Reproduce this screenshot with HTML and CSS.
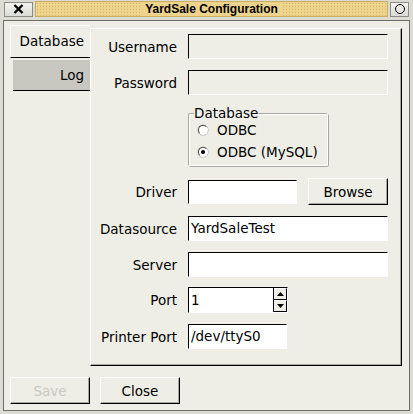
FILE: index.html
```html
<!DOCTYPE html>
<html>
<head>
<meta charset="utf-8">
<link rel="stylesheet" href="styles.css">
</head>
<body>
<div class="window">
  <div class="titlebar">
    <div class="tb-btn tb-close">
      <svg width="11" height="10" viewBox="0 0 11 10"><path d="M1.5 1 L9.5 9 M9.5 1 L1.5 9" stroke="#000" stroke-width="2.4"/></svg>
    </div>
    <div class="tb-title"><span>YardSale Configuration</span></div>
    <div class="tb-btn tb-max">
      <svg width="12" height="12" viewBox="0 0 12 12"><circle cx="6" cy="6" r="4.5" fill="none" stroke="#000" stroke-width="1"/></svg>
    </div>
  </div>
  <div class="client">
    <div class="tabwidget">
      <div class="tabs">
        <div class="tab tab-active">Database</div>
        <div class="tab">Log</div>
      </div>
      <div class="panel">
        <div class="form">
          <div class="row">
            <label class="lbl">Username</label>
            <div class="field wide disabled"></div>
          </div>
          <div class="row">
            <label class="lbl">Password</label>
            <div class="field wide disabled"></div>
          </div>
          <div class="row row-group">
            <span class="lbl"></span>
            <fieldset class="group">
              <legend>Database</legend>
              <div class="radio"><span class="rb"></span>ODBC</div>
              <div class="radio"><span class="rb checked"></span>ODBC (MySQL)</div>
            </fieldset>
          </div>
          <div class="row row-driver">
            <label class="lbl">Driver</label>
            <div class="field short"></div>
            <div class="btn browse">Browse</div>
          </div>
          <div class="row">
            <label class="lbl">Datasource</label>
            <div class="field wide">YardSaleTest</div>
          </div>
          <div class="row">
            <label class="lbl">Server</label>
            <div class="field wide"></div>
          </div>
          <div class="row row-port">
            <label class="lbl">Port</label>
            <div class="spin">
              <div class="spin-text">1</div>
              <div class="spin-btns">
                <div class="spin-up"><svg width="7" height="4" viewBox="0 0 7 4"><path d="M3.5 0 L7 4 L0 4 Z" fill="#000"/></svg></div>
                <div class="spin-down"><svg width="7" height="4" viewBox="0 0 7 4"><path d="M0 0 L7 0 L3.5 4 Z" fill="#000"/></svg></div>
              </div>
            </div>
          </div>
          <div class="row">
            <label class="lbl">Printer Port</label>
            <div class="field port">/dev/ttyS0</div>
          </div>
        </div>
      </div>
    </div>
    <div class="buttons">
      <div class="btn dim">Save</div>
      <div class="btn">Close</div>
    </div>
  </div>
</div>
</body>
</html>
```

FILE: styles.css
```css
html, body {
  margin: 0;
  padding: 0;
}
body {
  width: 413px;
  height: 414px;
  overflow: hidden;
  background: #dcdcd4;
  font-family: "DejaVu Sans", sans-serif;
  font-size: 13.5px;
  color: #000;
}
.window {
  width: 413px;
  height: 414px;
  box-sizing: border-box;
  display: flex;
  flex-direction: column;
  background: #dcdcd4;
  padding: 0 3px 3px 3px;
}
.titlebar {
  height: 20px;
  box-sizing: border-box;
  display: flex;
  align-items: center;
  padding: 0 1px 2px 1px;
  gap: 2px;
}
.tb-btn {
  height: 15px;
  box-sizing: border-box;
  border: 1px solid #8c8c86;
  background: linear-gradient(#f4f4f0, #dcdcd6);
  display: flex;
  align-items: center;
  justify-content: center;
}
.tb-close {
  width: 29px;
}
.tb-max {
  width: 19px;
}
.tb-title {
  flex: 1;
  height: 16px;
  box-sizing: border-box;
  border: 1px solid #c9ad62;
  background-color: #edd38c;
  background-image: radial-gradient(circle, #d6b864 0.7px, transparent 0.9px);
  background-size: 3px 3px;
  display: flex;
  align-items: center;
  justify-content: center;
}
.tb-title span {
  font-family: "Liberation Sans", Arial, sans-serif;
  font-weight: bold;
  font-size: 12px;
  background: #edd38c;
  padding: 0 5px;
  line-height: 14px;
}
.client {
  flex: 1;
  border: 1px solid #6e6e68;
  background: #eeeee6;
  padding: 4px 6px 0 6px;
  display: flex;
  flex-direction: column;
}
.tabwidget {
  display: flex;
  align-items: flex-start;
}
.tabs {
  width: 80px;
  display: flex;
  flex-direction: column;
}
.tab {
  height: 33px;
  box-sizing: border-box;
  text-align: right;
  padding-right: 6px;
  line-height: 32px;
  border-bottom: 1px solid #000;
}
.tab-active {
  border-top: 1px solid #fff;
  border-left: 1px solid #fff;
  line-height: 31px;
}
.tab:not(.tab-active) {
  margin-top: 2px;
  margin-left: 3px;
  height: 31px;
  line-height: 30px;
  background: #c8c8c0;
}
.panel {
  margin-top: 3px;
  width: 312px;
  height: 338px;
  box-sizing: border-box;
  border: 1px solid;
  border-color: #fff #000 #000 #fff;
  box-shadow: inset -1px -1px 0 #a8a8a0;
}
.form {
  padding: 5px 0 0 6px;
  display: flex;
  flex-direction: column;
  gap: 11px;
}
.row {
  display: flex;
  align-items: center;
  gap: 11px;
  height: 25px;
}
.row-group {
  height: 61px;
  align-items: flex-start;
}
.row-driver {
  height: 27px;
}
.row-port {
  height: 26px;
  margin-top: -1px;
}
.lbl {
  width: 80px;
  flex: none;
  text-align: right;
}
.field {
  height: 25px;
  box-sizing: border-box;
  border: 1px solid;
  border-color: #000 #fff #fff #000;
  background: #fff;
  padding-left: 2px;
  line-height: 23px;
  white-space: nowrap;
}
.wide {
  width: 200px;
}
.short {
  width: 109px;
  height: 24px;
}
.port {
  width: 99px;
}
.disabled {
  background: #eeeee6;
}
.group {
  margin: 0;
  padding: 0;
  width: 140px;
  height: 60px;
  box-sizing: border-box;
  border: 1px solid;
  border-color: #a8a8a0 #fff #fff #a8a8a0;
  border-radius: 2px;
  box-shadow: inset 1px 1px 0 #fff, 1px 1px 0 #a8a8a0;
}
.group legend {
  padding: 0;
  margin-left: 5px;
  line-height: 15px;
}
.radio {
  display: flex;
  align-items: center;
  gap: 9px;
  height: 18px;
  margin-left: 9px;
}
.radio + .radio {
  margin-top: 4px;
}
.rb {
  width: 10px;
  height: 10px;
  box-sizing: border-box;
  border-radius: 50%;
  border: 1px solid;
  border-color: #555550 #fff #fff #555550;
  background: #fff;
  box-shadow: 0 0 0 0.5px #a8a8a0;
  display: flex;
  align-items: center;
  justify-content: center;
}
.rb.checked::after {
  content: "";
  width: 4px;
  height: 4px;
  border-radius: 50%;
  background: #000;
}
.btn {
  width: 80px;
  height: 27px;
  box-sizing: border-box;
  border: 1px solid;
  border-color: #fff #000 #000 #fff;
  box-shadow: inset -1px -1px 0 #a8a8a0;
  background: #eeeee6;
  display: flex;
  align-items: center;
  justify-content: center;
}
.dim {
  color: #c9c9c1;
}
.spin {
  width: 100px;
  height: 26px;
  box-sizing: border-box;
  border: 1px solid;
  border-color: #000 #fff #fff #000;
  background: #fff;
  display: flex;
}
.spin-text {
  flex: 1;
  padding-left: 2px;
  line-height: 24px;
}
.spin-btns {
  width: 13px;
  display: flex;
  flex-direction: column;
  border-left: 1px solid #000;
}
.spin-up, .spin-down {
  flex: 1;
  background: #eeeee6;
  border: 1px solid;
  border-color: #fff #000 #000 #fff;
  border-left: none;
  display: flex;
  align-items: center;
  justify-content: center;
}
.buttons {
  margin-top: 11px;
  display: flex;
  gap: 10px;
}
```
